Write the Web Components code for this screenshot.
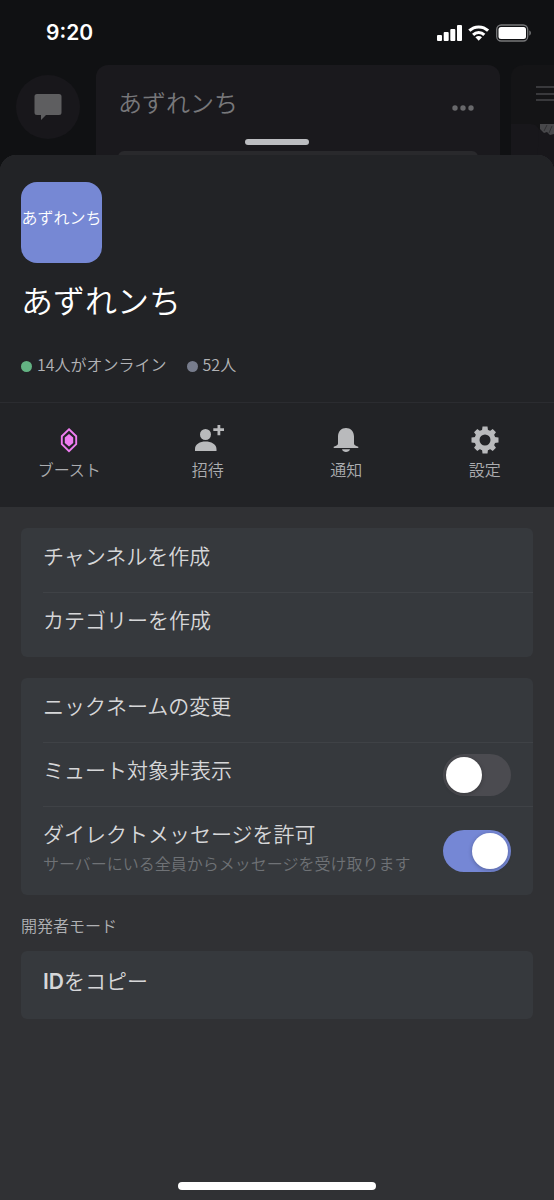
<!DOCTYPE html>
<html lang="ja">
<head>
<meta charset="utf-8">
<meta name="viewport" content="width=device-width, initial-scale=1">
<title>あずれンち</title>
<style>
  html, body { margin: 0; min-height: 100%; background: #303134; }
  body { font-family: "Noto Sans CJK JP", sans-serif; font-weight: 350; color: #d6d7d9; }
</style>
</head>
<body>
<server-screen></server-screen>

<script>
const define = (name, html, setup) => {
  const template = document.createElement('template');
  template.innerHTML = html;
  customElements.define(name, class extends HTMLElement {
    connectedCallback() {
      if (this.shadowRoot) return;
      this.attachShadow({ mode: 'open' }).append(template.content.cloneNode(true));
      if (setup) setup(this, this.shadowRoot);
    }
  });
};

/* Clock, signal, wifi and battery */
define('status-bar', `
  <style>
    :host { display: flex; justify-content: space-between; align-items: center; height: 65px; padding: 0 22px 0 46px; box-sizing: border-box; color: #fff; }
    time { font: 600 21px/24px Inter, sans-serif; }
    svg { display: block; }
  </style>
  <time>9:20</time>
  <svg width="96" height="20" viewBox="0 0 96 20" fill="#fff" aria-hidden="true">
    <rect x="1" y="12" width="5" height="6" rx="1"/><rect x="7.700" y="9" width="5" height="9" rx="1"/>
    <rect x="14.300" y="6" width="5" height="12" rx="1"/><rect x="21" y="2" width="5" height="16" rx="1"/>
    <g fill="none" stroke="#fff" stroke-width="3">
      <path d="M33.3 7.7a13.5 13.5 0 0 1 18.8 0"/><path d="M37.1 11.9a8 8 0 0 1 11.2 0"/>
    </g>
    <path d="M39.4 14.3a4.7 4.7 0 0 1 6.6 0L42.7 17.8z"/>
    <rect x="60.700" y="2" width="31" height="16" rx="4.500" fill="none" stroke="#77787a" stroke-width="1.300"/>
    <rect x="62.500" y="4" width="27.500" height="12" rx="2.500"/>
    <path d="M93.300 7.500v5c1-.3 1.600-1.400 1.600-2.500s-.6-2.200-1.600-2.500z" fill="#77787a"/>
  </svg>`);

/* Dimmed server list behind the sheet */
define('dimmed-app', `
  <style>
    :host { display: flex; flex-direction: column; background: #101113; }
    .panes { flex: 1; display: flex; min-height: 0; }
    .rail { width: 96px; padding: 10px 16px; box-sizing: border-box; }
    .bubble { display: grid; place-items: center; width: 64px; height: 64px; border-radius: 50%; background: #18171b; }
    .channels { flex: 1; padding: 22px 22px 0; border-radius: 12px 12px 0 0; background: #1a191d; }
    header { display: flex; justify-content: space-between; align-items: center; color: #77777a; }
    .name { font-size: 24px; line-height: 30px; }
    .dots { margin: 12px 4px 0 0; }
    .search { height: 20px; margin-top: 34px; border-radius: 6px; background: #29292c; }
    .peek { width: 43px; margin-left: 11px; border-radius: 12px 0 0 0; background: #141416; overflow: hidden; }
    svg { display: block; }
  </style>
  <status-bar></status-bar>
  <div class="panes">
    <div class="rail"><div class="bubble">
      <svg width="28" height="28" viewBox="0 0 28 28" fill="#5e5e60"><path d="M3 1h22a2.500 2.500 0 0 1 2.500 2.500v16A2.500 2.500 0 0 1 25 22H12l-5 5v-5H3a2.500 2.500 0 0 1-2.500-2.500v-16A2.500 2.500 0 0 1 3 1z"/></svg>
    </div></div>
    <div class="channels">
      <header><span class="name">あずれンち</span>
        <svg class="dots" width="22" height="6" viewBox="0 0 22 6" fill="#68686b"><circle cx="3" cy="3" r="2.700"/><circle cx="11" cy="3" r="2.700"/><circle cx="19" cy="3" r="2.700"/></svg>
      </header>
      <div class="search"></div>
    </div>
    <div class="peek">
      <svg width="43" height="100" viewBox="0 0 43 100">
        <path d="M0 59h20q6 0 8 6v35H0z" fill="#18171b"/><path d="M28 65h15v35H26z" fill="#18171b"/>
        <path d="M25 22h18M25 29h18M25 35h18" stroke="#39393c" stroke-width="2"/>
        <path d="M29 59h14v10l-4 1-3-3-3 1-4-4z" fill="#47474a"/><path d="M33 66l3-6M38 68l3-7" stroke="#2f2f32" stroke-width="1"/>
      </svg>
    </div>
  </div>`);

define('member-count', `
  <style>
    :host { display: flex; gap: 5px; align-items: center; font-size: 16px; line-height: 24px; color: #b2b3b6; }
    i { width: 11px; height: 11px; margin-top: 4px; border-radius: 50%; background: var(--dot); }
  </style>
  <i></i><span><slot></slot></span>`);

define('action-button', `
  <style>
    :host { display: block; }
    button { display: flex; flex-direction: column; align-items: center; gap: 2px; width: 100%; height: 104px; padding: 22px 0 0; border: 0; background: none; font: inherit; font-size: 16px; line-height: 24px; color: #acadb0; }
    ::slotted(svg) { display: block; fill: #b9babc; }
  </style>
  <button type="button"><slot name="icon"></slot><span><slot></slot></span></button>`);

define('server-header', `
  <style>
    :host { display: block; background: #222326; border-radius: 16px 16px 0 0; }
    .about { padding: 27px 21px 0; }
    .icon { display: flex; justify-content: center; width: 81px; height: 81px; padding-top: 23px; box-sizing: border-box; border-radius: 16px; background: #7688d4; color: #fff; font-size: 16px; line-height: 24px; white-space: nowrap; }
    h1 { margin: 12px 0 0; font-size: 32px; line-height: 48px; font-weight: 350; color: #fff; }
    .counts { display: flex; gap: 20px; padding: 29px 0 26px; }
    nav { display: grid; grid-template-columns: repeat(4, 1fr); border-top: 1px solid #2b2c30; }
  </style>
  <div class="about">
    <div class="icon">あずれンち</div>
    <h1>あずれンち</h1>
    <div class="counts">
      <member-count style="--dot:#63b383">14人がオンライン</member-count>
      <member-count style="--dot:#777c8c">52人</member-count>
    </div>
  </div>
  <nav>
    <action-button><svg slot="icon" width="32" height="30" viewBox="0 0 32 30"><path d="M16 4.200l7.200 7V19.200l-7.200 7-7.200-7V11.200z" fill="none" stroke="#ee7df0" stroke-width="1.900"/><path d="M16 9l4.200 3.600v5.400L16 21.500l-4.200-3.500v-5.400z" fill="#ee7df0"/></svg>ブースト</action-button>
    <action-button><svg slot="icon" width="32" height="30" viewBox="0 0 32 30"><circle cx="13.500" cy="9.500" r="5.500"/><path d="M3 26v-2c0-5 5-7.500 10.500-7.500S24.500 19 24.500 24v2zM25.500 -1h2.800v4.300H32V6h-3.700v4.300h-2.800V6h-4.200V3.300h4.200z"/></svg>招待</action-button>
    <action-button><svg slot="icon" width="32" height="30" viewBox="0 0 32 30"><path d="M8 11.500C8 6.300 11.500 3 16 3s8 3.300 8 8.500v7c0 1.600 1.200 2.300 4.300 3.300v1.200H3.700v-1.200C6.800 20.800 8 20.100 8 18.500zM12 24.200h8c-.8 3.700-7.200 3.700-8 0z"/></svg>通知</action-button>
    <action-button><svg slot="icon" width="32" height="30" viewBox="-16 -15 32 30"><circle r="8" fill="none" stroke="#b9babc" stroke-width="5"/><path d="M-3-9.500l.5-4h5l.5 4zM-3 9.500l.5 4h5l.5-4zM-9.500-3l-4 .5v5l4 .5zM9.500-3l4 .5v5l-4 .5z"/><path transform="rotate(45)" d="M-3-9l.7-4.200h4.600L3-9zM-3 9l.7 4.200h4.600L3 9zM-9-3l-4.200.7v4.600L-9 3zM9-3l4.200.7v4.600L9 3z"/></svg>設定</action-button>
  </nav>`);

/* Rounded group of rows */
define('settings-group', `
  <style>
    :host { display: block; padding-bottom: 1px; border-radius: 6px; background: #36393d; }
    ::slotted(settings-row:not(:first-child)) { --line: #3f4246; }
  </style>
  <slot></slot>`);

define('settings-row', `
  <style>
    :host { display: block; padding-left: 22px; }
    .row { display: flex; justify-content: space-between; width: 100%; min-height: 64px; padding: 11px 22px 10px 0; box-sizing: border-box; border: 0; border-top: 1px solid var(--line, transparent); background: none; font: inherit; color: inherit; text-align: left; }
    .text { display: block; }
    .label { display: block; font-size: 21px; line-height: 30px; }
    .note { display: block; font-size: 16px; line-height: 30px; color: #6f7276; }
    .note:empty { display: none; }
    input { appearance: none; align-self: center; flex: none; width: 68px; height: 42px; margin: 0; padding: 3px; box-sizing: border-box; border-radius: 21px; background: #4b4b50; }
    input::before { content: ""; display: block; width: 36px; height: 36px; border-radius: 50%; background: #fff; box-shadow: 0 1px 4px #0004; }
    input:checked { background: #7587d5; }
    input:checked::before { margin-left: auto; }
    :host([note]) .row { min-height: 88px; }
  </style>`, (host, root) => {
    const toggle = host.hasAttribute('toggle');
    const row = document.createElement(toggle ? 'div' : 'button');
    row.className = 'row';
    row.innerHTML = toggle
      ? `<label class="text" for="switch"><span class="label"><slot></slot></span><span class="note"></span></label><input id="switch" type="checkbox" role="switch">`
      : `<span class="text"><span class="label"><slot></slot></span></span>`;
    if (toggle) {
      row.querySelector('.note').textContent = host.getAttribute('note') || '';
      row.querySelector('input').checked = host.hasAttribute('checked');
    }
    root.append(row);
  });

define('server-settings', `
  <style>
    :host { display: block; padding: 21px 21px 0; }
    settings-group + settings-group { margin-top: 21px; }
    h2 { margin: 18px 0 14px; font-size: 16px; line-height: 24px; font-weight: 350; color: #b0b1b4; }
    b { font-family: Inter, sans-serif; font-weight: 600; }
    .single { padding: 2px 0; }
  </style>
  <settings-group>
    <settings-row>チャンネルを作成</settings-row>
    <settings-row>カテゴリーを作成</settings-row>
  </settings-group>
  <settings-group>
    <settings-row>ニックネームの変更</settings-row>
    <settings-row toggle>ミュート対象非表示</settings-row>
    <settings-row toggle checked note="サーバーにいる全員からメッセージを受け取ります">ダイレクトメッセージを許可</settings-row>
  </settings-group>
  <h2>開発者モード</h2>
  <settings-group class="single">
    <settings-row><b>ID</b>をコピー</settings-row>
  </settings-group>`);

define('bottom-sheet', `
  <style>
    :host { display: flex; flex-direction: column; }
    .grabber { width: 64px; height: 6px; margin: 0 auto 10px; border-radius: 3px; background: #bcbdc1; }
    .body { flex: 1; display: flex; flex-direction: column; border-radius: 16px 16px 0 0; background: #303134; }
    .home { width: 198px; height: 8px; margin: auto auto 10px; border-radius: 4px; background: #fff; }
  </style>
  <div class="grabber"></div>
  <div class="body"><slot></slot><div class="home"></div></div>`);

/* The sheet shares one grid cell with the dimmed app and lies over it */
define('server-screen', `
  <style>
    :host { display: grid; min-height: 100vh; }
    dimmed-app, bottom-sheet { grid-area: 1 / 1; min-width: 0; }
    bottom-sheet { padding-top: 139px; }
  </style>
  <dimmed-app></dimmed-app>
  <bottom-sheet><server-header></server-header><server-settings></server-settings></bottom-sheet>`);
</script>
</body>
</html>
